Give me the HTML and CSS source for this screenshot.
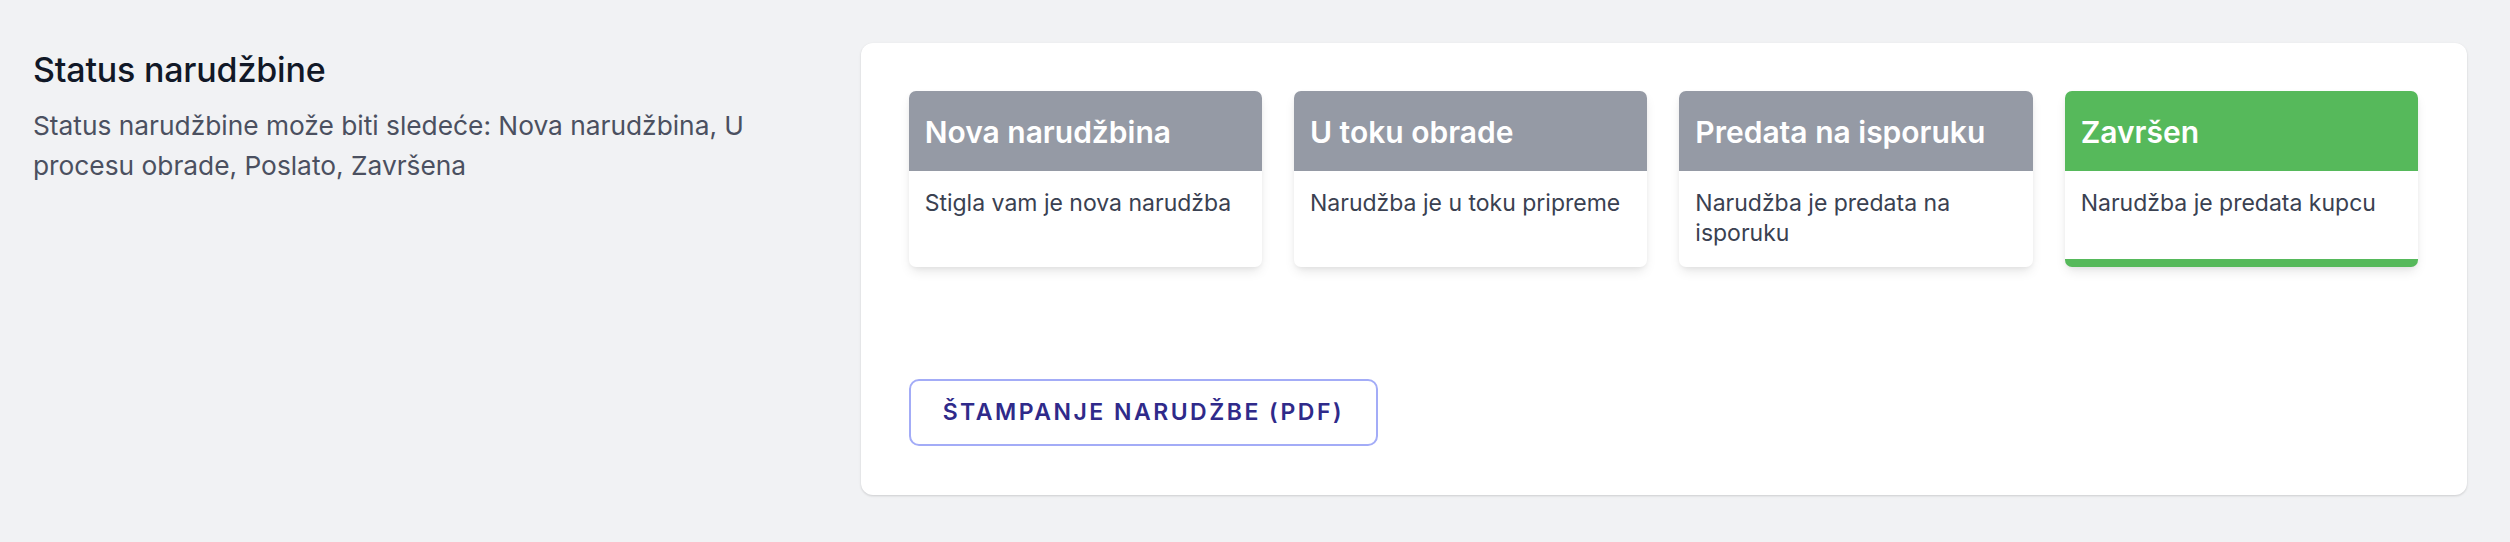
FILE: index.html
```html
<!DOCTYPE html>
<html lang="sr">
<head>
<meta charset="utf-8">
<title>Status narudžbine</title>
<link rel="stylesheet" href="styles.css">
</head>
<body>
<div class="page">
  <section class="layout">
    <div class="intro">
      <h3 class="intro-title">Status narudžbine</h3>
      <p class="intro-text">Status narudžbine može biti sledeće: Nova narudžbina, U procesu obrade, Poslato, Završena</p>
    </div>
    <div class="panel">
      <div class="statuses">
        <div class="status">
          <div class="status-head">Nova narudžbina</div>
          <div class="status-body">Stigla vam je nova narudžba</div>
        </div>
        <div class="status">
          <div class="status-head">U toku obrade</div>
          <div class="status-body">Narudžba je u toku pripreme</div>
        </div>
        <div class="status">
          <div class="status-head">Predata na isporuku</div>
          <div class="status-body">Narudžba je predata na isporuku</div>
        </div>
        <div class="status status-active">
          <div class="status-head">Završen</div>
          <div class="status-body">Narudžba je predata kupcu</div>
        </div>
      </div>
      <div class="actions">
        <button class="btn-outline" type="button">Štampanje narudžbe (PDF)</button>
      </div>
    </div>
  </section>
</div>
</body>
</html>
```
FILE: styles.css
```css
* { box-sizing: border-box; }
html, body { margin: 0; padding: 0; }
body {
  background: #f1f2f4;
  font-family: Inter, "Noto Sans", sans-serif;
  width: 2510px;
  height: 542px;
  overflow: hidden;
}
.page {
  padding: 43px 43px 0 33px;
}
.layout {
  display: grid;
  grid-template-columns: repeat(3, 1fr);
  column-gap: 49px;
}
.intro {
  grid-column: span 1;
  padding-top: 5px;
}
.intro-title {
  margin: 0;
  font-size: 34px;
  line-height: 44px;
  font-weight: 500;
  color: #111827;
  letter-spacing: -0.2px;
}
.intro-text {
  margin: 14px 0 0;
  font-size: 26.3px;
  line-height: 40px;
  color: #4b5060;
}
.panel {
  grid-column: span 2;
  background: #fff;
  border-radius: 12px;
  box-shadow: 0 1px 3px rgba(0,0,0,0.10), 0 1px 2px rgba(0,0,0,0.06);
  padding: 48px 49px 49px 48px;
}
.statuses {
  display: grid;
  grid-template-columns: repeat(4, 1fr);
  gap: 32px;
}
.status {
  background: #fff;
  border-radius: 7px;
  box-shadow: 0 6px 12px -2px rgba(0,0,0,0.10), 0 2px 5px -1px rgba(0,0,0,0.06);
  display: flex;
  flex-direction: column;
  overflow: hidden;
}
.status-head {
  background: #959aa5;
  color: #fff;
  height: 80px;
  padding: 1px 16px 0;
  display: flex;
  align-items: center;
  font-size: 30px;
  font-weight: 600;
}
.status-body {
  flex: 1;
  padding: 17px 16px 19px;
  font-size: 23px;
  line-height: 30px;
  color: #3a4151;
}
.status-active .status-head { background: #56b95b; }
.status-active { border-bottom: 8px solid #56b95b; }
.actions {
  margin-top: 112px;
}
.btn-outline {
  font-family: inherit;
  background: #fff;
  border: 2px solid #a3acf7;
  border-radius: 10px;
  color: #2f2a8a;
  text-transform: uppercase;
  font-size: 23px;
  font-weight: 600;
  letter-spacing: 2.5px;
  line-height: 27px;
  padding: 18px 32px;
  cursor: pointer;
}
```
